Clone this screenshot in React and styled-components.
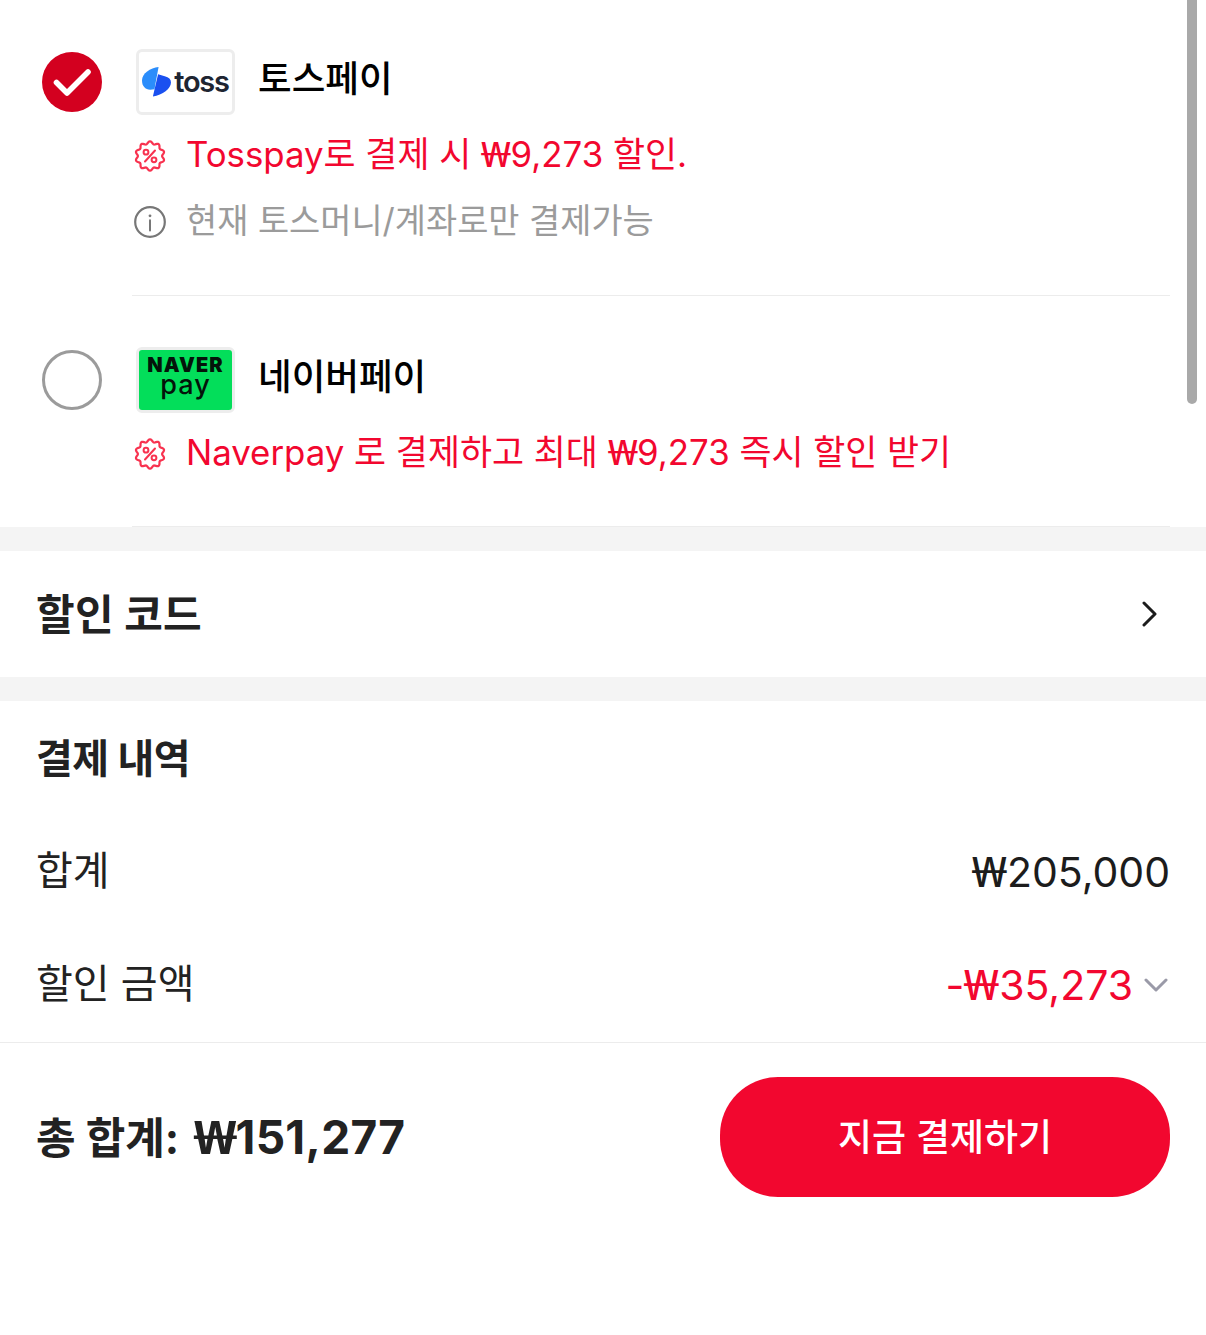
import React from "react";
import styled, { createGlobalStyle } from "styled-components";

const RED = "#f2072f";

// scalloped badge outline, r wobbles around the circle
const badgePath = (() => {
  const pts = [];
  for (let i = 0; i < 120; i++) {
    const a = (i / 120) * Math.PI * 2;
    const r = 13.4 + 1.3 * Math.cos(a * 10);
    pts.push(`${(16 + r * Math.sin(a)).toFixed(2)} ${(16 - r * Math.cos(a)).toFixed(2)}`);
  }
  return "M" + pts.join("L") + "Z";
})();

const BadgeIcon = () => (
  <Glyph viewBox="0 0 32 32" fill="none" stroke="#f8324f">
    <path d={badgePath} strokeWidth="2.2" strokeLinejoin="round" />
    <circle cx="12" cy="12.2" r="2.4" strokeWidth="2" />
    <circle cx="20" cy="19.8" r="2.4" strokeWidth="2" />
    <path d="M21 10.5 11 21.5" strokeWidth="2" strokeLinecap="round" />
  </Glyph>
);

const InfoIcon = () => (
  <Glyph viewBox="0 0 32 32" fill="none" stroke="#777">
    <circle cx="16" cy="16" r="14.8" strokeWidth="2.2" />
    <circle cx="16" cy="9.8" r="1.4" fill="#777" stroke="none" />
    <path d="M16 14.2V24.4" strokeWidth="2" strokeLinecap="round" />
  </Glyph>
);

const TossMark = () => (
  <svg width="29" height="30" viewBox="0 0 28 29">
    <path d="M16 0C8 1 0 6 0 13 0 18 3 22 8 22L12 21.5Z" fill="#2b8dfb" />
    <path d="M15.5 7 22 9C26 10 28 12 28 15 28 21 20 27 10.5 28.5Z" fill="#1a50f0" />
  </svg>
);

const App = () => (
  <>
    <GlobalStyle />
    <Page>
      <Scrollbar />
      <PaymentList>
        <Option>
          <Radio $checked>
            <svg width="60" height="60" viewBox="0 0 60 60" fill="none">
              <path d="M14.5 30.5 25 41 46 20" stroke="#fff" strokeWidth="5.6" strokeLinecap="round" strokeLinejoin="round" />
            </svg>
          </Radio>
          <OptionBody>
            <OptionHead>
              <LogoBox>
                <TossMark />
                <TossWord>toss</TossWord>
              </LogoBox>
              <OptionName>토스페이</OptionName>
            </OptionHead>
            <Note $tone="red">
              <BadgeIcon />
              <span>Tosspay로 결제 시 <Won>₩</Won>9,273 할인.</span>
            </Note>
            <Note $tone="grey">
              <InfoIcon />
              <span>현재 토스머니/계좌로만 결제가능</span>
            </Note>
          </OptionBody>
        </Option>
        <Option>
          <Radio />
          <OptionBody>
            <OptionHead>
              <LogoBox $naver>
                <NaverWord>NAVER</NaverWord>
                <PayWord>pay</PayWord>
              </LogoBox>
              <OptionName>네이버페이</OptionName>
            </OptionHead>
            <Note $tone="red">
              <BadgeIcon />
              <span>Naverpay 로 결제하고 최대 <Won>₩</Won>9,273 즉시 할인 받기</span>
            </Note>
          </OptionBody>
        </Option>
      </PaymentList>

      <CodeRow>
        <CodeTitle>할인 코드</CodeTitle>
        <svg width="18" height="26" viewBox="0 0 18 26" fill="none">
          <path d="M3 2 14 13 3 24" stroke="#1c1c1c" strokeWidth="3" strokeLinecap="round" strokeLinejoin="round" />
        </svg>
      </CodeRow>

      <Summary>
        <SummaryTitle>결제 내역</SummaryTitle>
        <SummaryRow>
          <RowLabel>합계</RowLabel>
          <Amount><span><Won>₩</Won>205,000</span></Amount>
        </SummaryRow>
        <SummaryRow>
          <RowLabel>할인 금액</RowLabel>
          <Amount $red>
            <span>-<Won>₩</Won>35,273</span>
            <svg width="24" height="14" viewBox="0 0 24 14" fill="none">
              <path d="M2 2 12 12 22 2" stroke="#9a9aa8" strokeWidth="3" strokeLinecap="round" strokeLinejoin="round" />
            </svg>
          </Amount>
        </SummaryRow>
      </Summary>

      <Footer>
        <Total>총 합계: <TotalValue><Won>₩</Won>151,277</TotalValue></Total>
        <PayButton>지금 결제하기</PayButton>
      </Footer>
    </Page>
  </>
);

export default App;

////////////////////////// CSS //////////////////////////
const GlobalStyle = createGlobalStyle`
  html, body {
    margin: 0;
    padding: 0;
    background: #fff;
  }
  body {
    font-family: Inter, "Noto Sans CJK KR", sans-serif;
    color: #1c1c1c;
  }
`;

const Page = styled.div`
  position: relative;
  height: 1335px;
  overflow: hidden;
  background: #fff;
`;

const Scrollbar = styled.div`
  position: absolute;
  top: -6px;
  right: 9px;
  width: 10px;
  height: 410px;
  border-radius: 5px;
  background: #a9a9a9;
`;

// Noto Sans has the single-bar won sign, stretched to the reference's width
const Won = styled.span`
  display: inline-block;
  width: 0.85em;
  text-align: center;
  font-family: "Noto Sans", sans-serif;
  line-height: 1;
  transform: scaleX(1.3);
`;

const PaymentList = styled.div`
  padding: 0 36px 0 42px;
`;

const Option = styled.div`
  display: flex;
  align-items: flex-start;
  gap: 30px;
  &:first-child > div:last-child {
    padding-top: 49px;
    padding-bottom: 41px;
  }
  &:first-child > div:first-child {
    margin-top: 52px;
  }
`;

const Radio = styled.div`
  flex: none;
  box-sizing: border-box;
  width: 60px;
  height: 60px;
  margin-top: 54px;
  border-radius: 50%;
  border: ${(p) => (p.$checked ? "none" : "3px solid #9b9b9b")};
  background: ${(p) => (p.$checked ? "#d3001f" : "#fff")};
`;

const OptionBody = styled.div`
  flex: 1;
  padding-top: 51px;
  padding-bottom: 40px;
  border-bottom: 1px solid #ececec;
`;

const OptionHead = styled.div`
  display: flex;
  align-items: center;
  gap: 23px;
  height: 66px;
  padding-left: 4px;
  margin-bottom: 7px;
`;

const LogoBox = styled.div`
  box-sizing: border-box;
  flex: none;
  width: 99px;
  height: 66px;
  border: 3px solid #ededed;
  border-radius: 6px;
  display: flex;
  overflow: hidden;
  align-items: center;
  justify-content: center;
  flex-direction: ${(p) => (p.$naver ? "column" : "row")};
  gap: ${(p) => (p.$naver ? "0" : "3px")};
  background: ${(p) => (p.$naver ? "#03de5a" : "#fff")};
`;

const TossWord = styled.span`
  font: 600 29px/1 Inter, sans-serif;
  letter-spacing: -1.2px;
  color: #1e2532;
  margin-bottom: 1px;
`;

const NaverWord = styled.span`
  font: 900 20px/19px Inter, sans-serif;
  letter-spacing: 1.1px;
  color: #04140a;
`;

const PayWord = styled.span`
  font: 500 27px/20px Inter, sans-serif;
  letter-spacing: 1px;
  color: #04140a;
  margin-bottom: 10px;
`;

const OptionName = styled.div`
  font-size: 36.6px;
  font-weight: 500;
  color: #000;
  margin-bottom: 12px;
`;

const Note = styled.div`
  display: flex;
  align-items: center;
  gap: 20px;
  height: 66px;
  padding-left: 2px;
  font-size: ${(p) => (p.$tone === "red" ? "34.8px" : "33.9px")};
  white-space: nowrap;
  color: ${(p) => (p.$tone === "red" ? RED : "#9b9b9b")};
  > span {
    margin-bottom: 6px;
  }
`;

const Glyph = styled.svg`
  flex: none;
  width: 32px;
  height: 32px;
  margin-top: 2px;
`;

const CodeRow = styled.div`
  display: flex;
  align-items: center;
  justify-content: space-between;
  height: 126px;
  padding: 0 47px 0 36px;
  border-top: 24px solid #f4f4f4;
  border-bottom: 24px solid #f4f4f4;
`;

const CodeTitle = styled.div`
  font-size: 42px;
  font-weight: 700;
  color: #222;
  letter-spacing: 0.3px;
  margin-bottom: 6px;
`;

const Summary = styled.div`
  padding: 30px 36px 0;
  height: 311px;
  border-bottom: 1px solid #ececec;
`;

const SummaryTitle = styled.div`
  font-size: 40px;
  line-height: 56px;
  font-weight: 700;
  color: #222;
  letter-spacing: -0.5px;
  margin-bottom: 27px;
`;

const SummaryRow = styled.div`
  display: flex;
  align-items: center;
  justify-content: space-between;
  height: 113px;
  font-size: 40px;
  color: #222;
`;

const RowLabel = styled.span`
  margin-bottom: 6px;
`;

const Amount = styled.div`
  display: flex;
  align-items: center;
  gap: 11px;
  font-size: 41px;
  margin-top: 2px;
  padding-right: ${(p) => (p.$red ? "2px" : "0")};
  color: ${(p) => (p.$red ? RED : "#1c1c1c")};
`;

const Footer = styled.div`
  display: flex;
  align-items: center;
  justify-content: space-between;
  padding: 34px 36px;
`;

const Total = styled.div`
  font-size: 43px;
  font-weight: 700;
  color: #222;
  margin-bottom: 4px;
`;

const TotalValue = styled.span`
  font-size: 46px;
  letter-spacing: 0.3px;
  margin-left: 7px;
`;

const PayButton = styled.button`
  width: 450px;
  height: 120px;
  border: none;
  border-radius: 58px;
  padding-bottom: 6px;
  background: ${RED};
  color: #fff;
  font: 500 37px "Inter", "Noto Sans CJK KR", sans-serif;
`;
